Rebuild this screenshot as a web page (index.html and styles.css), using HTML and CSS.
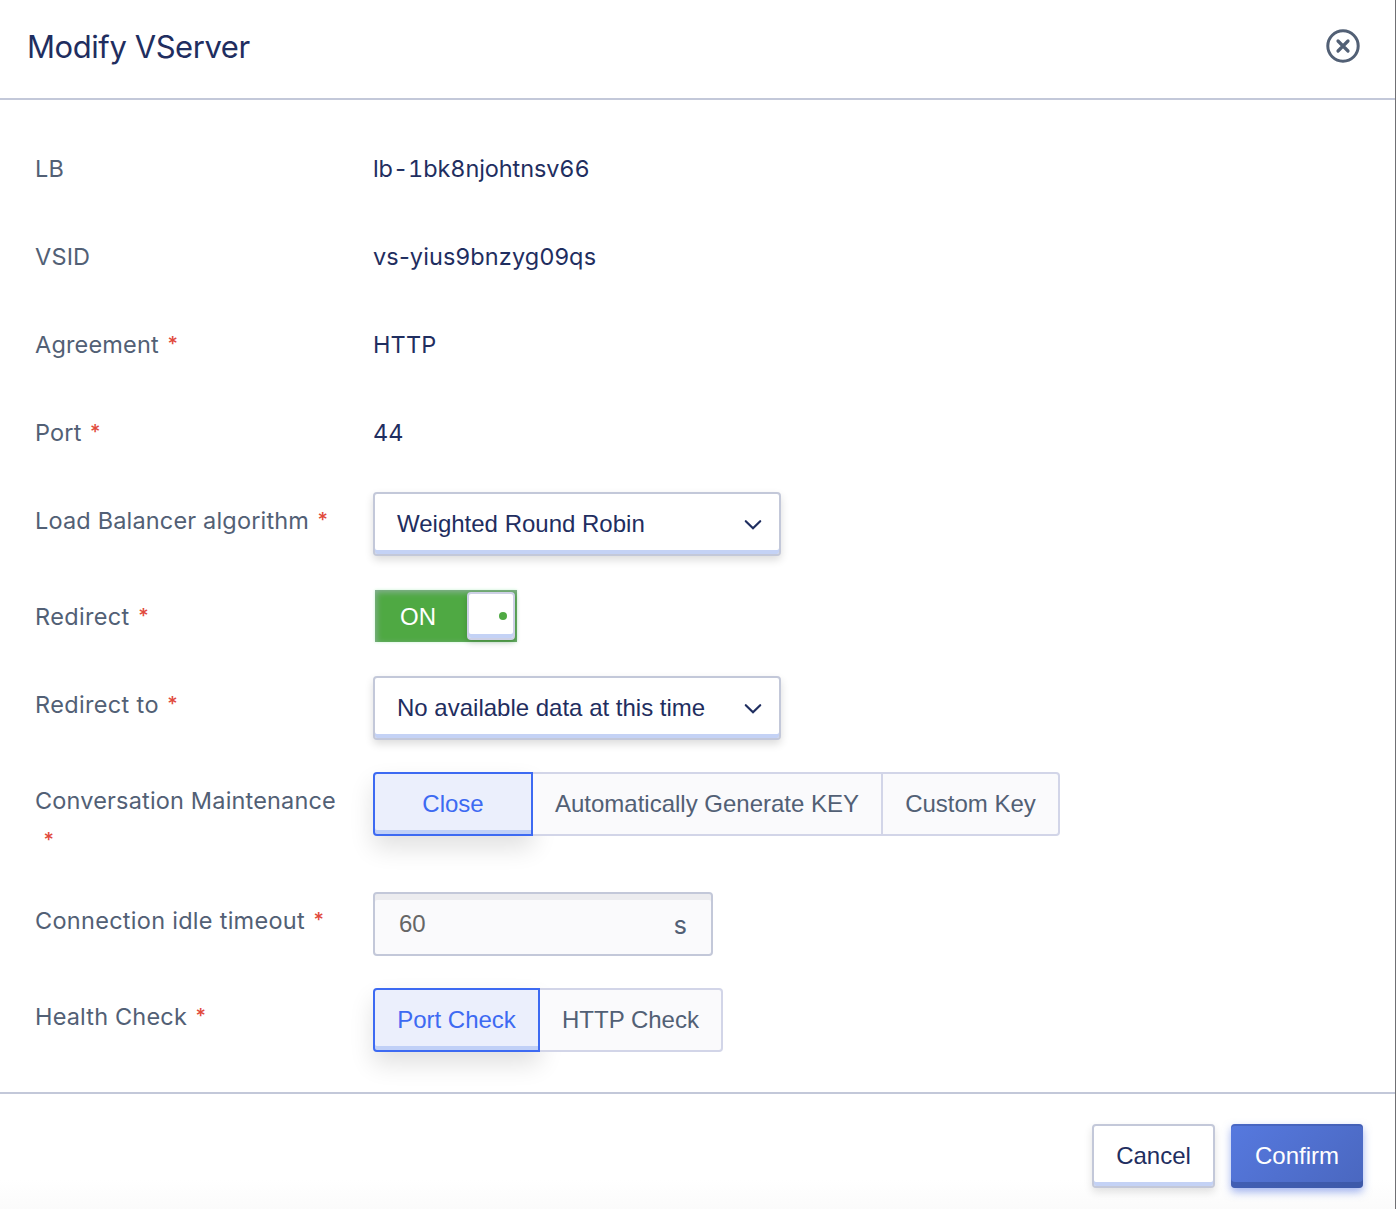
FILE: index.html
```html
<!DOCTYPE html>
<html lang="en">
<head>
<meta charset="utf-8">
<title>Modify VServer</title>
<link rel="stylesheet" href="styles.css">
</head>
<body>
<div class="dialog">
  <header class="header">
    <h1 class="title">Modify VServer</h1>
    <button class="close" aria-label="Close dialog">
      <svg width="34" height="34" viewBox="0 0 34 34" fill="none" stroke="#526075" stroke-width="3"><circle cx="17" cy="17" r="15.2"/><path d="M12 12l10 10M22 12l-10 10" stroke-width="3.2" stroke-linecap="round"/></svg>
    </button>
  </header>
  <main class="form">
    <div class="row"><div class="label">LB</div><div class="value value-lb">lb-1bk8njohtnsv66</div></div>
    <div class="row"><div class="label">VSID</div><div class="value">vs-yius9bnzyg09qs</div></div>
    <div class="row"><div class="label">Agreement<span class="req">*</span></div><div class="value">HTTP</div></div>
    <div class="row"><div class="label">Port<span class="req">*</span></div><div class="value">44</div></div>
    <div class="row"><div class="label">Load Balancer algorithm<span class="req">*</span></div>
      <div class="select"><span>Weighted Round Robin</span><svg width="18" height="12" viewBox="0 0 18 12" fill="none" stroke="#1f2e60" stroke-width="2.2" stroke-linecap="round"><path d="M1.8 2.2l7.2 7 7.2-7"/></svg></div></div>
    <div class="row"><div class="label label-redirect">Redirect<span class="req">*</span></div>
      <div class="switch"><span class="switch-text">ON</span><span class="knob"><i class="dot"></i></span></div></div>
    <div class="row"><div class="label label-redirect">Redirect to<span class="req">*</span></div>
      <div class="select"><span>No available data at this time</span><svg width="18" height="12" viewBox="0 0 18 12" fill="none" stroke="#1f2e60" stroke-width="2.2" stroke-linecap="round"><path d="M1.8 2.2l7.2 7 7.2-7"/></svg></div></div>
    <div class="row row-tall"><div class="label">Conversation Maintenance <span class="req">*</span></div>
      <div class="segments"><button class="segment active seg-close">Close</button><button class="segment seg-auto">Automatically Generate KEY</button><button class="segment seg-custom">Custom Key</button></div></div>
    <div class="row"><div class="label label-timeout">Connection idle timeout<span class="req">*</span></div>
      <div class="input"><span class="input-value">60</span><span class="unit">s</span></div></div>
    <div class="row"><div class="label">Health Check<span class="req">*</span></div>
      <div class="segments"><button class="segment active seg-port">Port Check</button><button class="segment seg-http">HTTP Check</button></div></div>
  </main>
  <footer class="footer">
    <button class="btn cancel">Cancel</button>
    <button class="btn confirm">Confirm</button>
  </footer>
</div>
</body>
</html>
```
FILE: styles.css
```css
* { box-sizing: border-box; }
body { margin: 0; background: #fff; font-family: Inter, sans-serif; }
button { margin: 0; padding: 0; border: 0; background: none; font: inherit; }
.dialog {
  display: flex; flex-direction: column; width: 1396px; height: 1209px;
  border-right: 1px solid #707074; color: #1f2e60; overflow: hidden;
  background: linear-gradient(#fff 1180px, #fbfbfb 1209px);
}
.header {
  display: flex; align-items: center; justify-content: space-between;
  height: 100px; padding: 0 35px 6px 27px; border-bottom: 2px solid #c3c8d9;
}
.title { margin: 0; padding-top: 2px; font-size: 31px; font-weight: 400; line-height: 40px; letter-spacing: -0.43px; }
.close { display: flex; width: 34px; height: 34px; }
.form {
  display: flex; flex-direction: column; gap: 32px;
  height: 992px; padding: 40px 35px 0; flex: none;
}
.row { display: flex; align-items: flex-start; min-height: 56px; flex: none; }
.row-tall { height: 88px; }
.label { width: 338px; padding: 9px 26px 0 0; flex: none; font-size: 23.5px; line-height: 40px; letter-spacing: 0.17px; color: #526075; }
.label-redirect { letter-spacing: 0.35px; }
.label-timeout { letter-spacing: 0.28px; }
.req { margin-left: 8.5px; font-size: 20px; font-weight: 500; line-height: 1; vertical-align: 2px; color: #e14a3c; }
.value { padding-top: 9px; font-size: 23.5px; line-height: 40px; letter-spacing: 0.14px; }
.value-lb { font-variant-numeric: tabular-nums; letter-spacing: -0.1px; }
.select, .segment, .input, .btn, .switch { font-family: "Liberation Sans", Arial, sans-serif; font-size: 24px; }
.select {
  display: flex; align-items: center; justify-content: space-between;
  width: 408px; height: 64px; padding: 0 17px 0 22px;
  border: 2px solid #c3c8d9; border-radius: 4px; background: #fff;
  box-shadow: inset 0 -4px 0 #c4d2f5, 0 4px 8px rgba(0, 0, 0, .14);
}
.select svg { margin-top: 2px; }
.switch {
  display: flex; align-items: flex-start; justify-content: space-between;
  width: 142px; height: 52px; margin: 2px 0 0 2px; padding: 2px 2px 0 25px;
  background: #4fa943; color: #fff;
  box-shadow: inset 1px 2px 6px #8caf9b, 0 0 3px #c9f3d2;
}
.switch-text { line-height: 50px; }
.knob {
  display: flex; align-items: center; justify-content: flex-end;
  width: 48px; height: 48px; padding: 0 6px 0 0; border: 2px solid #cdd0e5; border-radius: 4px;
  background: #fff; box-shadow: inset 0 -4px 0 #c4d2f5, 0 3px 6px rgba(0, 0, 0, .16);
}
.dot { width: 8px; height: 8px; border-radius: 50%; background: #4fa943; }
.segments { display: flex; }
.segment {
  height: 64px; border: 2px solid #d2d5e8; border-left: 0; background: #fafafc; color: #526075;
}
.segment:last-child { border-radius: 0 4px 4px 0; }
.segment.active {
  border: 2px solid #3d6af2; border-radius: 4px 0 0 4px;
  background: #ebeffc; color: #3d6af2;
  box-shadow: inset 0 -4px 0 #c0d0f7, 0 12px 24px rgba(0, 0, 0, .12);
}
.seg-close { width: 160px; }
.seg-auto { width: 350px; }
.seg-custom { width: 177px; }
.seg-port { width: 167px; }
.seg-http { width: 183px; }
.input {
  display: flex; align-items: center; justify-content: space-between;
  width: 340px; height: 64px; padding: 0 24px 0 24px;
  border: 2px solid #c3c8d9; border-radius: 4px; background: #fafafc;
  box-shadow: inset 0 6px 0 #ececef;
}
.input-value { color: #666; }
.unit { font-family: Inter, sans-serif; font-size: 25.5px; color: #526075; }
.footer {
  display: flex; justify-content: flex-end; gap: 16px; flex: 1;
  padding: 30px 32px 0 0; border-top: 2px solid #c3c8d9;
}
.btn { height: 64px; border-radius: 4px; }
.cancel {
  width: 123px; border: 2px solid #c3c8d9; background: #fff; color: #1f2e60;
  box-shadow: inset 0 -4px 0 #c4d2f5, 0 4px 8px rgba(0, 0, 0, .12);
}
.confirm {
  width: 132px; color: #fff;
  background: linear-gradient(135deg, #5679df, #4a67bf);
  box-shadow: inset 0 -6px 0 rgba(48, 73, 145, .5), inset 0 2px 0 rgba(48, 73, 145, .35), 0 4px 8px rgba(70, 105, 225, .5);
}
```
